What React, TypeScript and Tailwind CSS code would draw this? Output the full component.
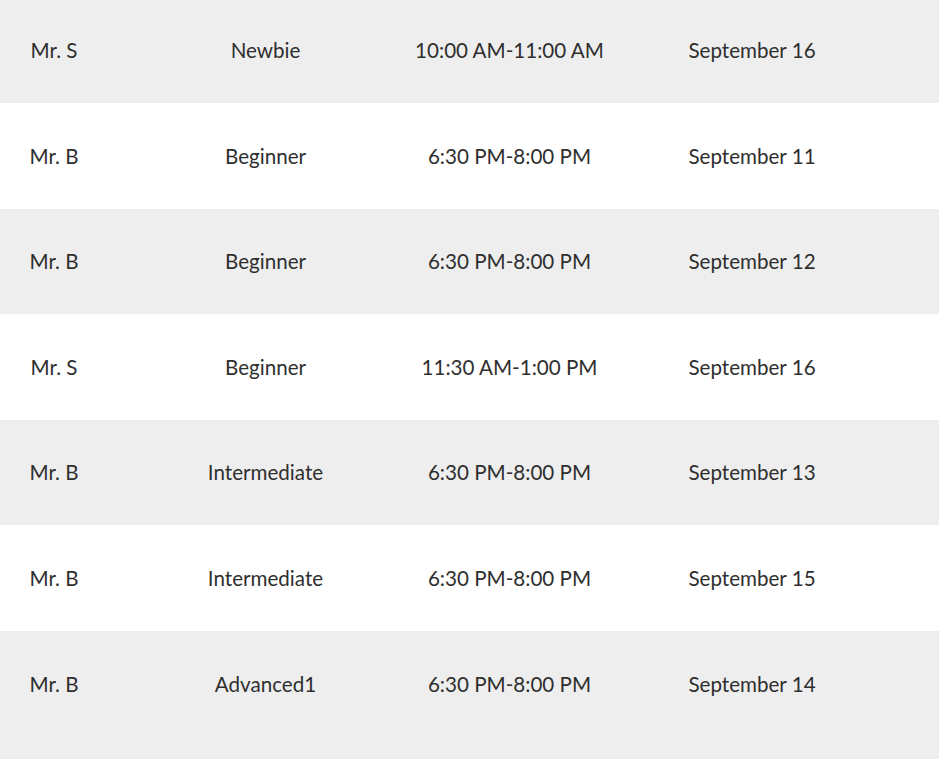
const ROWS = [
  { teacher: "Mr. S", level: "Newbie", time: "10:00 AM-11:00 AM", date: "September 16" },
  { teacher: "Mr. B", level: "Beginner", time: "6:30 PM-8:00 PM", date: "September 11" },
  { teacher: "Mr. B", level: "Beginner", time: "6:30 PM-8:00 PM", date: "September 12" },
  { teacher: "Mr. S", level: "Beginner", time: "11:30 AM-1:00 PM", date: "September 16" },
  { teacher: "Mr. B", level: "Intermediate", time: "6:30 PM-8:00 PM", date: "September 13" },
  { teacher: "Mr. B", level: "Intermediate", time: "6:30 PM-8:00 PM", date: "September 15" },
  { teacher: "Mr. B", level: "Advanced1", time: "6:30 PM-8:00 PM", date: "September 14" },
];

// row heights as measured, last row runs off the bottom
const HEIGHTS = [
  "h-[103px] pb-[2px]",
  "h-[106px]",
  "h-[105px]",
  "h-[106px]",
  "h-[105px]",
  "h-[106px]",
  "h-[128px] pb-[22px]",
];

function Cell({ children }: { children: string }) {
  return <div className="flex justify-center whitespace-nowrap">{children}</div>;
}

export default function App() {
  return (
    <div className="w-[939px] h-[759px] overflow-hidden bg-white text-[20.6px] text-[#2f2f2f] font-['Lato','Open_Sans',sans-serif]">
      {ROWS.map((row, i) => (
        <div
          key={i}
          className={`${HEIGHTS[i]} grid grid-cols-[108px_173px_173px_170px] gap-x-[71px] items-center ${
            i % 2 === 0 ? "bg-[#eeeeee]" : "bg-white"
          }`}
        >
          <Cell>{row.teacher}</Cell>
          <Cell>{row.level}</Cell>
          <Cell>{row.time}</Cell>
          <Cell>{row.date}</Cell>
        </div>
      ))}
    </div>
  );
}
